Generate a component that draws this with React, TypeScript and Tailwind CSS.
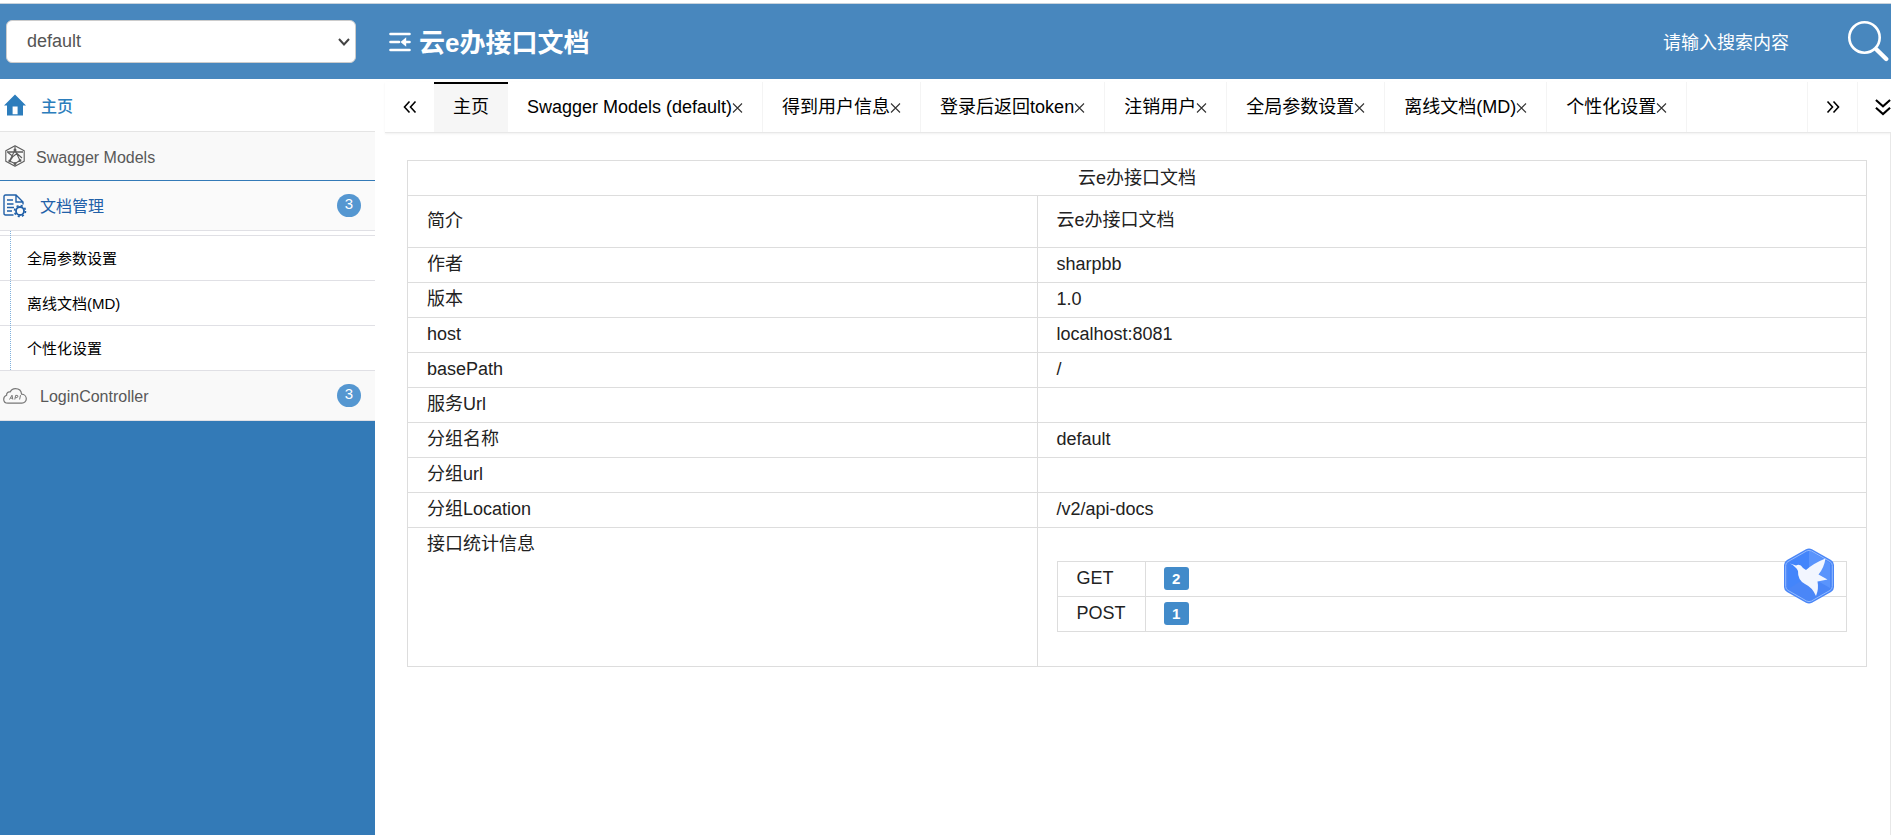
import React from "react";

const tabs = [
  "Swagger Models (default)",
  "得到用户信息",
  "登录后返回token",
  "注销用户",
  "全局参数设置",
  "离线文档(MD)",
  "个性化设置",
];

const docLinks = ["全局参数设置", "离线文档(MD)", "个性化设置"];

const infoRows = [
  { label: "作者", value: "sharpbb" },
  { label: "版本", value: "1.0" },
  { label: "host", value: "localhost:8081" },
  { label: "basePath", value: "/" },
  { label: "服务Url", value: "" },
  { label: "分组名称", value: "default" },
  { label: "分组url", value: "" },
  { label: "分组Location", value: "/v2/api-docs" },
];

const methodCounts = [
  { method: "GET", count: 2 },
  { method: "POST", count: 1 },
];

function HomeIcon() {
  return (
    <svg className="h-[22px] w-[22px]" viewBox="0 0 22 22" fill="#2c7dbc">
      <path fillRule="evenodd" d="M11 0.5 22 11.5H19V21.5H3V11.5H0ZM8.6 12.6V20.2H13.6V12.6Z" />
    </svg>
  );
}

function ModelIcon() {
  return (
    <svg className="h-[22px] w-5" viewBox="0 0 20 22" fill="none" stroke="#5c5c5c" strokeWidth="1.1" strokeLinejoin="round">
      <path d="M10 0.800 19.200 5.800V16.200L10 21.200 0.800 16.200V5.800Z" />
      <path d="M2 7H18" strokeWidth="1.500" />
      <path d="M10 1V5L4.500 16M10 5 15 15.500M3 7.500 8 11.500 5 16M8 11.500 12 8.500 17 13M4.500 16 10 18.500 15 15.500M10 18.500V21" />
      <path d="M9.200 4.200H10.800V5.800H9.200ZM4 15.300H5.500V16.800H4ZM9.200 17.800H10.800V19.300H9.200ZM14.300 14.800H15.800V16.300H14.300Z" fill="#5c5c5c" />
    </svg>
  );
}

function DocIcon() {
  return (
    <svg className="h-6 w-6" viewBox="0 0 24 24" fill="none" stroke="#2160a8" strokeWidth="1.4">
      <path d="M10.5 21H2.5Q1 21 1 19.5V2.5Q1 1 2.5 1H13L20 8V10.5M13 1V8H20" />
      <path d="M4 6H10M4 10H10.5M4 13.5H11M4 17H9" />
      <circle cx="17" cy="17" r="4" strokeWidth="1.8" />
      <circle cx="17" cy="17" r="5.5" strokeWidth="1.6" strokeDasharray="2.1 2.22" />
    </svg>
  );
}

function ApiIcon() {
  return (
    <svg className="h-4 w-6" viewBox="0 0 24 16" fill="none" stroke="#777" strokeWidth="1.2" strokeLinejoin="round">
      <path d="M5 15.2C2.4 15.2 0.7 13.4 0.7 11.2 0.7 9.2 2 7.8 3.6 7.2 3.3 4.8 5.4 3.3 7.2 4 8.2 1.8 10.2 0.7 12.4 0.7 15.8 0.7 18.3 3 18.6 6.2 21.3 6.3 23.3 8.3 23.3 10.8 23.3 13.3 21.3 15.2 19 15.2Z" />
      <path d="M6.5 11.5 9 7.2 9.8 11.5M7.5 10.2H9.6M11.8 11.5 12.6 7.4H14.2Q15.4 7.6 14.8 8.9 14.3 9.8 12.3 9.7M16.6 11.5 17.5 7.2" strokeWidth="1" />
    </svg>
  );
}

function CollapseIcon() {
  return (
    <svg className="h-5 w-[22px]" viewBox="0 0 22 20" fill="none" stroke="#fff" strokeWidth="2.6" strokeLinecap="round">
      <path d="M1.500 2H20.500M1.500 10H10M1.500 18H20.500M17 10H20.500" />
      <path d="M11.500 10 17.200 5.300V14.700Z" fill="#fff" stroke="none" />
    </svg>
  );
}

function SearchIcon() {
  return (
    <svg className="h-[41px] w-[41px]" viewBox="0 0 41 41" fill="none" stroke="#fff" strokeLinecap="round">
      <circle cx="16.5" cy="16.5" r="15.2" strokeWidth="2.6" />
      <path d="M28.5 28.500 38.200 38" strokeWidth="4.400" />
    </svg>
  );
}

function Chevrons({ className }: { className: string }) {
  return (
    <svg className={className} viewBox="0 0 14 14" fill="none" stroke="#000" strokeWidth="1.6">
      <path d="M1.5 1.5 6.5 7 1.5 12.5M7.5 1.5 12.5 7 7.5 12.5" />
    </svg>
  );
}

function BirdBadge() {
  return (
    <svg className="h-14 w-[50px]" viewBox="0 0 50 56">
      <path d="M22 1.2Q25 -0.4 28 1.2L47 12Q50 13.8 50 17V39Q50 42.2 47 44L28 54.8Q25 56.4 22 54.8L3 44Q0 42.2 0 39V17Q0 13.8 3 12Z" fill="#4a86f7" />
      <path d="M25 2V28L4 41V16Z" fill="#4385fb" />
      <path d="M25 2 46 15V40L25 28Z" fill="#5a94fc" />
      <path d="M22.5 3Q25 1.7 27.5 3L46 13.6Q48.3 15 48.3 17.5V38.5Q48.3 41 46 42.4L27.5 53Q25 54.3 22.5 53L4 42.4Q1.7 41 1.7 38.5V17.5Q1.7 15 4 13.6Z" fill="none" stroke="#93bbff" strokeWidth="1" />
      <path d="M6 15.5 12 17.5Q16 15 19 20L22 22Q30 15 41.500 10.500 40 20 34.500 26.500L43.500 31.500 33.500 33.500Q35 41 32 48 28 39 21 36 13.500 32 14 23 12 18.500 6 15.500Z" fill="#f2f6ff" />
    </svg>
  );
}

function CountBadge({ count }: { count: number }) {
  return (
    <span className="ml-auto flex h-[23px] w-6 items-center justify-center rounded-full bg-[#5597d1] pb-[3px] text-[15px] text-white">
      {count}
    </span>
  );
}

function Sidebar() {
  return (
    <nav className="flex w-[375px] shrink-0 flex-col bg-[#337ab7] text-base text-[#585858]">
      <a href="#" className="flex h-[53px] items-center gap-[15px] border-b border-[#e5e5e5] bg-white pl-1 font-medium text-[#2b7dbc]">
        <HomeIcon />
        <span className="pt-[3px]">主页</span>
      </a>
      <a href="#" className="flex h-[49px] items-center gap-[11px] border-b border-[#337ab7] bg-[#f9f9f9] pl-[5px]">
        <ModelIcon />
        <span className="pt-[3px]">Swagger Models</span>
      </a>
      <a href="#" className="flex h-[50px] items-center gap-[13px] border-b border-[#e0e0e5] bg-[#fafafa] pl-[3px] pr-[14px] text-[#2160a8]">
        <DocIcon />
        <span className="pt-[3px]">文档管理</span>
        <CountBadge count={3} />
      </a>
      <ul className="relative bg-white pt-1 text-[15px] text-black">
        {docLinks.map((link) => (
          <li key={link} className="border-t border-[#e0e0e5]">
            <a href="#" className="flex h-11 items-center pl-[27px] pt-[2px]">{link}</a>
          </li>
        ))}
        {/* tree guide line */}
        <li aria-hidden="true" className="absolute inset-y-0 left-[10px] border-l border-dotted border-[#7fb0dc]"></li>
      </ul>
      <a href="#" className="flex h-[51px] items-center gap-[13px] border-y border-[#e0e0e5] bg-[#f9f9f9] pl-[3px] pr-[14px]">
        <ApiIcon />
        <span className="pt-[3px]">LoginController</span>
        <CountBadge count={3} />
      </a>
    </nav>
  );
}

function TabBar() {
  return (
    <div className="mt-[3px] flex h-[51px] border-b border-[#e8e8e8] text-black shadow-[0_1px_2px_rgba(0,0,0,0.06)]">
      <button type="button" aria-label="prev" className="flex w-[49px] shrink-0 items-center justify-center">
        <Chevrons className="h-[14px] w-[14px] rotate-180" />
      </button>
      <button type="button" className="shrink-0 border-t-2 border-black bg-[#f6f6f6] px-[19px] pb-[2px]">主页</button>
      {tabs.map((tab) => (
        <button type="button" key={tab} className="flex shrink-0 items-center border-r border-[#f4f4f4] pl-[19px] pr-[19px]">
          {tab}
          <svg className="h-[11px] w-[11px]" viewBox="0 0 11 11" stroke="#333" strokeWidth="1.1">
            <path d="M1 1.5 10 10.5M10 1.5 1 10.5" />
          </svg>
        </button>
      ))}
      <button type="button" aria-label="next" className="ml-auto flex w-[51px] shrink-0 items-center justify-center border-x border-[#f4f4f4]">
        <Chevrons className="h-[14px] w-[14px]" />
      </button>
      <button type="button" aria-label="more" className="flex w-[33px] shrink-0 items-center justify-end overflow-hidden">
        <Chevrons className="-mr-[1px] h-[18px] w-[18px] shrink-0 rotate-90" />
      </button>
    </div>
  );
}

function InfoTable() {
  return (
    <table className="w-full table-fixed border-collapse text-[#222]">
      <colgroup>
        <col className="w-[43.15%]" />
        <col />
      </colgroup>
      <thead>
        <tr>
          <th colSpan={2} className="h-[35px] border border-[#ddd] text-center font-normal">云e办接口文档</th>
        </tr>
      </thead>
      <tbody>
        <tr>
          <td className="h-[52px] border border-[#ddd] px-[19px]">简介</td>
          <td className="border border-[#ddd] px-[19px] pb-[2px]">云e办接口文档</td>
        </tr>
        {infoRows.map((row) => (
          <tr key={row.label}>
            <td className="h-[35px] border border-[#ddd] px-[19px] pb-[2px]">{row.label}</td>
            <td className="border border-[#ddd] px-[19px] pb-[2px]">{row.value}</td>
          </tr>
        ))}
        <tr>
          <td className="border border-[#ddd] px-[19px] py-1 align-top">接口统计信息</td>
          <td className="border border-[#ddd] px-[19px] pt-[33px] pb-[34px]">
            <table className="w-full border-collapse">
              <tbody>
                {methodCounts.map((item) => (
                  <tr key={item.method}>
                    <td className="h-[35px] w-[87px] border border-[#ddd] px-[19px] pb-[2px]">{item.method}</td>
                    <td className="border border-[#ddd] px-[18px] pb-[2px]">
                      <span className="flex h-[23px] w-[25px] items-center justify-center rounded-[3px] bg-[#428bca] text-[15px] font-bold text-white">
                        {item.count}
                      </span>
                    </td>
                  </tr>
                ))}
              </tbody>
            </table>
          </td>
        </tr>
      </tbody>
    </table>
  );
}

export default function App() {
  return (
    <div className="flex min-h-screen flex-col bg-white pt-[3px] font-['Liberation_Sans','Noto_Sans_CJK_SC',sans-serif] text-[18px] leading-[25px]">
      <header className="flex h-[76px] shrink-0 items-center border-t border-[#c9d3dc] bg-[#4887be] pl-[6px] text-white">
        <div className="relative">
          <select aria-label="group" className="h-[43px] w-[350px] appearance-none rounded-md border border-[#ccc] bg-white px-5 text-[#555]">
            <option>default</option>
          </select>
          <svg className="pointer-events-none absolute top-[18px] right-[6px] h-2 w-3" viewBox="0 0 12 8" fill="none" stroke="#444" strokeWidth="2">
            <path d="M1 1 6 6.500 11 1" />
          </svg>
        </div>
        <button type="button" aria-label="collapse" className="ml-[33px]">
          <CollapseIcon />
        </button>
        <h1 className="ml-2 pt-1 text-[26px] font-bold">云e办接口文档</h1>
        <input
          type="text"
          aria-label="search"
          placeholder="请输入搜索内容"
          className="ml-auto w-[185px] bg-transparent pt-1 outline-none placeholder:text-white"
        />
        <button type="button" aria-label="submit search" className="mr-[2px]">
          <SearchIcon />
        </button>
      </header>
      <div className="flex grow">
        <Sidebar />
        <main className="ml-[10px] flex min-w-0 grow flex-col">
          <TabBar />
          <div className="grow border-r border-[#e8e8e8] pt-[27px] pr-[23px] pl-[22px]">
            <InfoTable />
          </div>
        </main>
      </div>
      <button type="button" aria-label="assistant" className="fixed top-[548px] right-[57px]">
        <BirdBadge />
      </button>
    </div>
  );
}
